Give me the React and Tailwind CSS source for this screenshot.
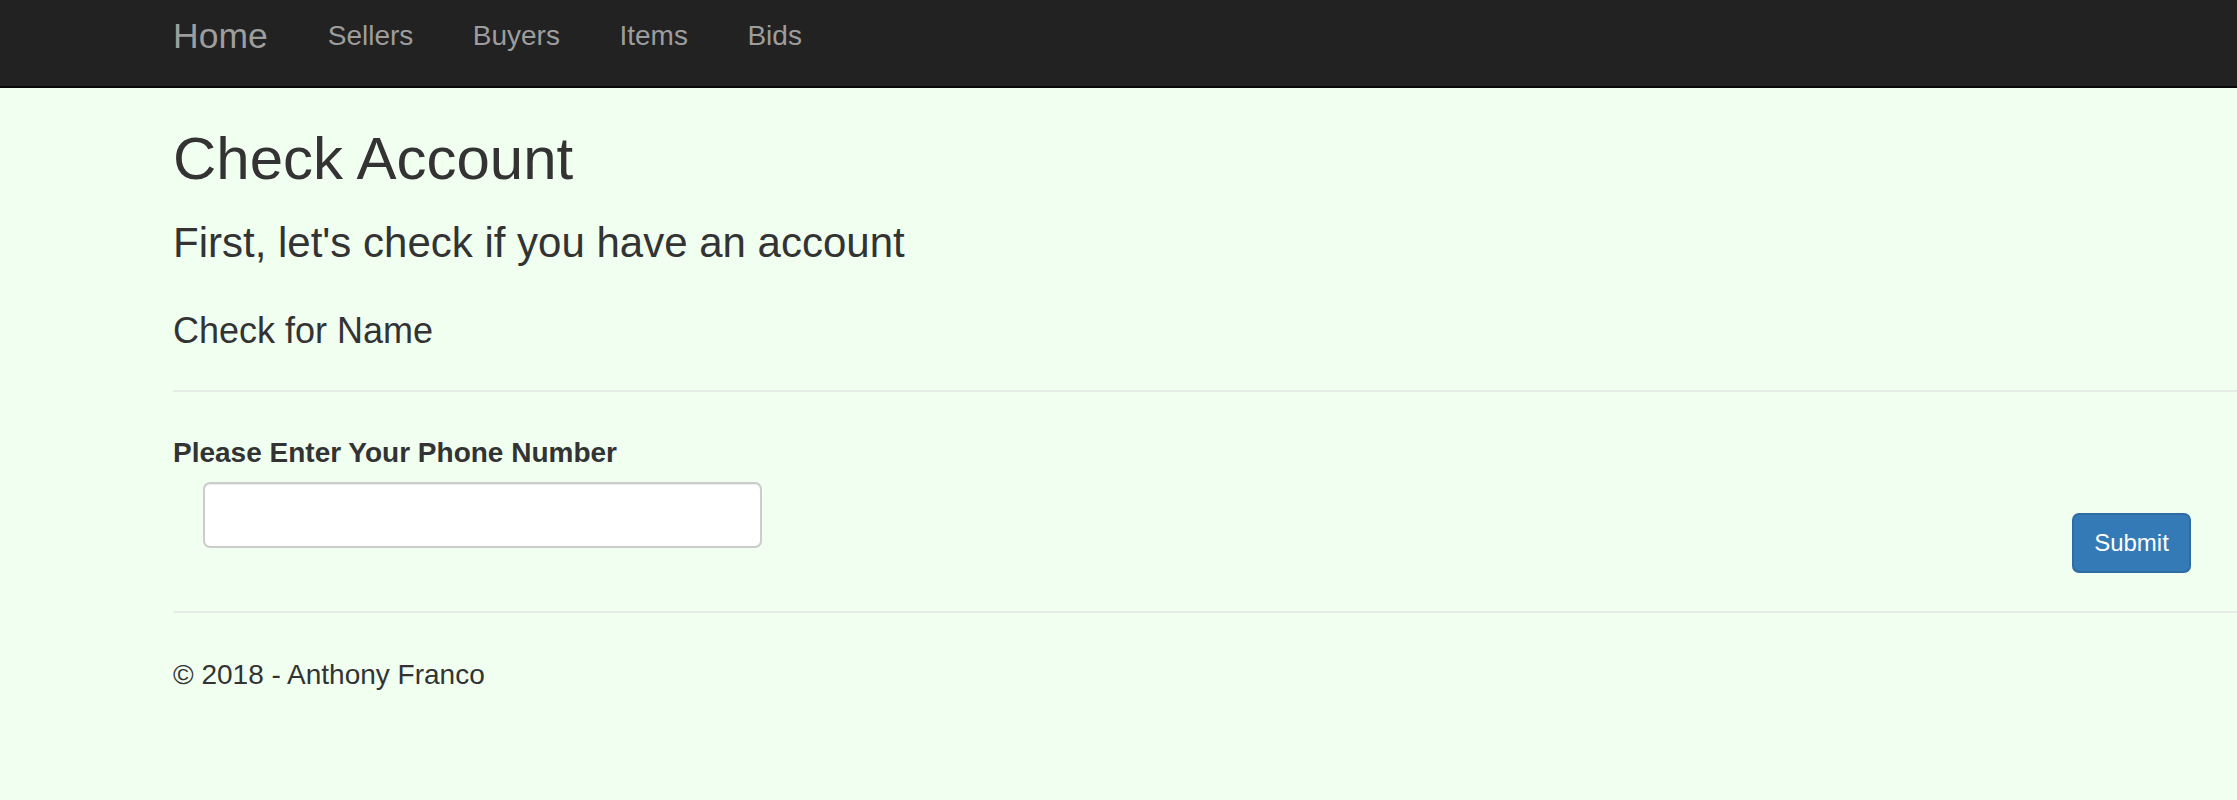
export default function App() {
  const font = { fontFamily: '"Liberation Sans", Arial, sans-serif' };
  return (
    <div className="min-h-[800px] bg-[#f0fff0] text-[#333]" style={font}>
      <nav className="h-[88px] bg-[#222] border-b-2 border-[#080808] flex items-start pl-[173px] gap-[59.5px]">
        <a className="mt-[16px] mr-[0.5px] text-[35.5px] leading-[40px] text-[#9d9d9d]">Home</a>
        <a className="mt-[20px] text-[28px] leading-[32px] text-[#9d9d9d]">Sellers</a>
        <a className="mt-[20px] text-[28px] leading-[32px] text-[#9d9d9d]">Buyers</a>
        <a className="mt-[20px] text-[28px] leading-[32px] text-[#9d9d9d]">Items</a>
        <a className="mt-[20px] text-[28px] leading-[32px] text-[#9d9d9d]">Bids</a>
      </nav>
      <main className="pl-[173px]">
        <h1 className="mt-[38px] text-[60px] leading-[66px] font-normal">Check Account</h1>
        <h3 className="mt-[28px] text-[42px] leading-[46px] font-normal">First, let's check if you have an account</h3>
        <h4 className="mt-[45px] text-[36px] leading-[40px] font-normal">Check for Name</h4>
        <hr className="mt-[39px] border-0 border-t-2 border-[#e6ede6]" />
        <label className="block mt-[45px] text-[28px] leading-[32px] font-bold">Please Enter Your Phone Number</label>
        <div className="flex items-start pr-[46px] mt-[13px]">
          <input
            type="text"
            className="ml-[30px] w-[559px] h-[66px] bg-white border-2 border-[#ccc] rounded-[7px] shadow-[inset_0_1px_1px_rgba(0,0,0,0.075)] outline-none"
          />
          <button className="ml-auto mt-[31px] w-[119px] h-[60px] bg-[#337ab7] border-2 border-[#2e6da4] rounded-[7px] text-white text-[24px] leading-[28px]">
            Submit
          </button>
        </div>
        <hr className="mt-[38px] border-0 border-t-2 border-[#e6ede6]" />
        <p className="mt-[46px] text-[28px] leading-[32px]">© 2018 - Anthony Franco</p>
      </main>
    </div>
  );
}
